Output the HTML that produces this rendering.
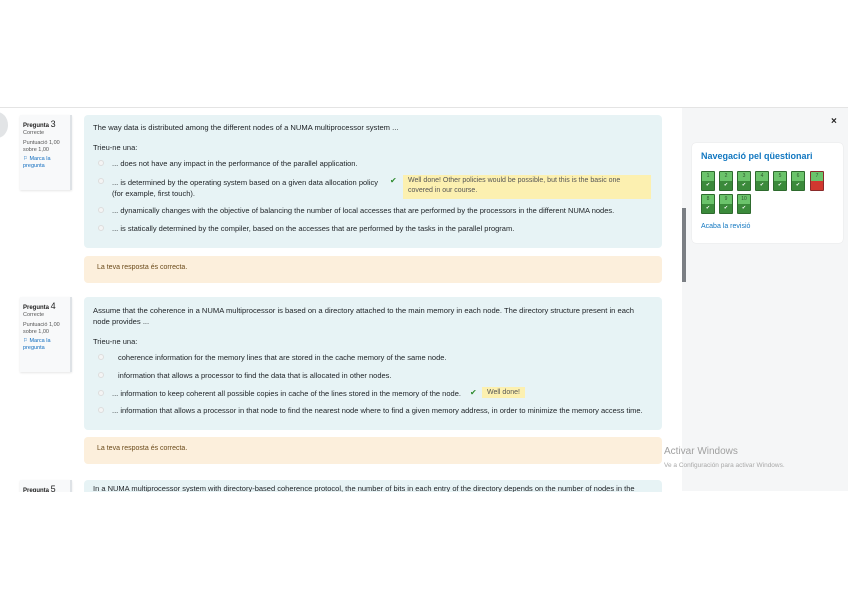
<!DOCTYPE html>
<html><head><meta charset="utf-8"><style>
*{margin:0;padding:0;box-sizing:border-box}
body{width:848px;height:599px;background:#fff;position:relative;overflow:hidden;font-family:"Liberation Sans",sans-serif;color:#333}
.a{position:absolute;white-space:nowrap}
.info{position:absolute;left:20px;width:52px;height:75px;background:#f8f9fa;border-right:2px solid #dee2e6;box-shadow:0 1px 2px rgba(0,0,0,.1);font-size:5.5px;padding:6px 3px;line-height:7px;color:#555}
.info b{color:#222;font-size:6px}
.info b span{font-size:9px;font-weight:normal}
.info .fl{color:#0f6cbf;margin-top:2px}
.q{position:absolute;left:84px;width:578px;background:#e7f3f5;border-radius:4px}
.fb{position:absolute;left:84px;width:578px;background:#fcefdc;border-radius:4px;font-size:7px;color:#6b4b1b}
.t{font-size:7.6px;color:#1d2125}
.o{font-size:7.5px}
.r{position:absolute;width:6px;height:6px;border:1px solid #ddd;border-radius:50%;background:#f4f4f4}
.ok{color:#2d8a2d;font-size:8px}
.wd{background:#fcf0b0;color:#555;font-size:7px;padding:2px 5px}
.btn{position:absolute;width:14px;height:20px;border-radius:1px;overflow:hidden;border:1px solid #2e6b2e}
.btn i{display:block;height:50%;background:#6bc36b;font-style:normal;font-size:5px;text-align:center;color:#2e5a2e;line-height:9px}
.btn em{display:block;height:50%;background:#3b8a3b;font-style:normal;font-size:5px;text-align:center;color:#fff;line-height:9px}
</style></head><body>
<div class="a" style="left:0;top:107px;width:848px;height:1px;background:#e4e4e4"></div>
<div class="a" style="left:-14px;top:112px;width:22px;height:26px;border-radius:50%;background:#e2e4e6"></div>

<div class="info" style="top:115px"><b>Pregunta <span>3</span></b><br>Correcte<div style="margin-top:3px">Puntuació 1,00<br>sobre 1,00</div><div class="fl">⚐ Marca la<br>pregunta</div></div>
<div class="q" style="top:115px;height:133px"></div>
<div class="a t" style="left:93px;top:123px">The way data is distributed among the different nodes of a NUMA multiprocessor system ...</div>
<div class="a t o" style="left:93px;top:143px">Trieu-ne una:</div>
<div class="r" style="left:98px;top:160px"></div><div class="a t o" style="left:112px;top:159px">... does not have any impact in the performance of the parallel application.</div>
<div class="r" style="left:98px;top:178px"></div><div class="a t o" style="left:112px;top:177px;line-height:11px">... is determined by the operating system based on a given data allocation policy<br>(for example, first touch).</div>
<div class="a ok" style="left:390px;top:176px">✔</div>
<div class="a wd" style="left:403px;top:175px;width:248px;height:24px;white-space:normal;line-height:10px;padding:1px 5px">Well done! Other policies would be possible, but this is the basic one covered in our course.</div>
<div class="r" style="left:98px;top:207px"></div><div class="a t o" style="left:112px;top:206px">... dynamically changes with the objective of balancing the number of local accesses that are performed by the processors in the different NUMA nodes.</div>
<div class="r" style="left:98px;top:225px"></div><div class="a t o" style="left:112px;top:224px">... is statically determined by the compiler, based on the accesses that are performed by the tasks in the parallel program.</div>
<div class="fb" style="top:256px;height:27px;padding:8px 13px">La teva resposta és correcta.</div>

<div class="info" style="top:297px"><b>Pregunta <span>4</span></b><br>Correcte<div style="margin-top:3px">Puntuació 1,00<br>sobre 1,00</div><div class="fl">⚐ Marca la<br>pregunta</div></div>
<div class="q" style="top:297px;height:133px"></div>
<div class="a t" style="left:93px;top:305px;line-height:11px">Assume that the coherence in a NUMA multiprocessor is based on a directory attached to the main memory in each node. The directory structure present in each<br>node provides ...</div>
<div class="a t o" style="left:93px;top:337px">Trieu-ne una:</div>
<div class="r" style="left:98px;top:354px"></div><div class="a t o" style="left:118px;top:353px">coherence information for the memory lines that are stored in the cache memory of the same node.</div>
<div class="r" style="left:98px;top:372px"></div><div class="a t o" style="left:118px;top:371px">information that allows a processor to find the data that is allocated in other nodes.</div>
<div class="r" style="left:98px;top:390px"></div><div class="a t o" style="left:112px;top:389px">... information to keep coherent all possible copies in cache of the lines stored in the memory of the node.</div>
<div class="a ok" style="left:470px;top:388px">✔</div>
<div class="a wd" style="left:482px;top:387px">Well done!</div>
<div class="r" style="left:98px;top:407px"></div><div class="a t o" style="left:112px;top:406px">... information that allows a processor in that node to find the nearest node where to find a given memory address, in order to minimize the memory access time.</div>
<div class="fb" style="top:437px;height:27px;padding:8px 13px">La teva resposta és correcta.</div>

<div style="position:absolute;left:0;top:478px;width:680px;height:14px;overflow:hidden">
<div class="info" style="top:2px"><b>Pregunta <span>5</span></b></div>
<div class="q" style="top:2px;height:40px"></div>
<div class="a t o" style="left:93px;top:6px">In a NUMA multiprocessor system with directory-based coherence protocol, the number of bits in each entry of the directory depends on the number of nodes in the</div>
</div>

<div class="a" style="left:682px;top:108px;width:166px;height:383px;background:#f5f6f7"></div>
<div class="a" style="left:682px;top:208px;width:4px;height:74px;background:#7b7f84"></div>
<div class="a" style="left:831px;top:116px;font-size:10px;font-weight:bold;color:#222">×</div>
<div class="a" style="left:692px;top:143px;width:151px;height:100px;background:#fff;border-radius:4px;box-shadow:0 0 1px rgba(0,0,0,.15)"></div>
<div class="a" style="left:701px;top:151px;font-size:9px;font-weight:bold;color:#1177c0">Navegació pel qüestionari</div>
<div class="btn" style="left:701px;top:171px"><i>1</i><em>✔</em></div>
<div class="btn" style="left:719px;top:171px"><i>2</i><em>✔</em></div>
<div class="btn" style="left:737px;top:171px"><i>3</i><em>✔</em></div>
<div class="btn" style="left:755px;top:171px"><i>4</i><em>✔</em></div>
<div class="btn" style="left:773px;top:171px"><i>5</i><em>✔</em></div>
<div class="btn" style="left:791px;top:171px"><i>6</i><em>✔</em></div>
<div class="btn" style="left:810px;top:171px;border-color:#8a2a2a"><i>7</i><em style="background:#d1382f"></em></div>
<div class="btn" style="left:701px;top:194px"><i>8</i><em>✔</em></div>
<div class="btn" style="left:719px;top:194px"><i>9</i><em>✔</em></div>
<div class="btn" style="left:737px;top:194px"><i>10</i><em>✔</em></div>
<div class="a" style="left:701px;top:223px;font-size:7px;color:#1177c0">Acaba la revisió</div>

<div class="a" style="left:664px;top:446px;font-size:10px;color:#a0a0a0">Activar Windows</div>
<div class="a" style="left:664px;top:462px;font-size:6.5px;color:#a8a8a8">Ve a Configuración para activar Windows.</div>
</body></html>
